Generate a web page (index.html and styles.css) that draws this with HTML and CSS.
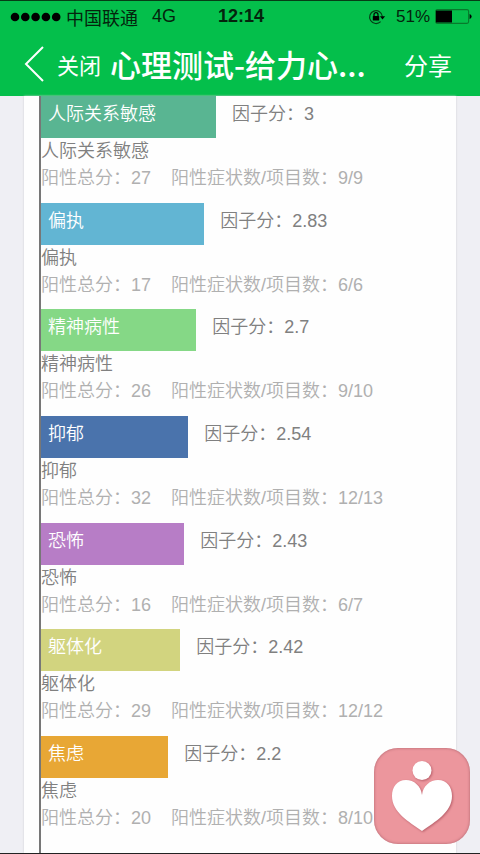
FILE: index.html
```html
<!DOCTYPE html>
<html lang="zh-CN">
<head>
<meta charset="utf-8">
<meta name="viewport" content="width=device-width, initial-scale=1">
<title>心理测试</title>
<link rel="stylesheet" href="styles.css">
</head>
<body>
<header class="top">
  <div class="status">
    <div class="status-left">
      <svg class="signal" viewBox="0 0 51 10" aria-hidden="true"><circle cx="5" cy="5" r="4.3"/><circle cx="15.3" cy="5" r="4.3"/><circle cx="25.6" cy="5" r="4.3"/><circle cx="35.9" cy="5" r="4.3"/><circle cx="46.2" cy="5" r="4.3"/></svg>
      <span>中国联通</span>
      <span class="network">4G</span>
    </div>
    <div class="clock">12:14</div>
    <div class="status-right">
      <svg class="lock" viewBox="0 0 18 16" aria-hidden="true"><path d="M12.6 12.6A6.4 6.4 0 1 1 14.4 7.500" fill="none" stroke="#063d16" stroke-width="1.2"/><path d="M11.900 7.2h5.2l-2.600 3.2z"/><rect x="4.800" y="7" width="6.4" height="4.6" rx=".5"/><path d="M6 7V5.600a2 2 0 0 1 4 0V7" fill="none" stroke="#000" stroke-width="1.2"/></svg>
      <span>51%</span>
      <svg class="battery" viewBox="0 0 37 15" aria-hidden="true"><rect x=".6" y=".6" width="33" height="13.8" rx="1.6" fill="none" stroke="#087a2c" stroke-width="1.1"/><rect x="1" y="1.5" width="16" height="12"/><path d="M34.6 5q2 .6 2 2.5t-2 2.5z"/></svg>
    </div>
  </div>
  <nav class="nav">
    <button class="back" type="button" aria-label="返回"><svg viewBox="0 0 20 36" aria-hidden="true"><path d="M19 1 2 18l17 17" fill="none" stroke="#fff" stroke-width="2"/></svg></button>
    <button class="close" type="button">关闭</button>
    <h1 class="title">心理测试-给力心...</h1>
    <button class="share" type="button">分享</button>
  </nav>
</header>
<main class="card">
  <ul class="factors">
    <li><div class="row"><div class="bar green" style="width:44%">人际关系敏感</div><span class="score">因子分：3</span></div><h2 class="name">人际关系敏感</h2><p class="stats"><span>阳性总分：27</span><span>阳性症状数/项目数：9/9</span></p></li>
    <li><div class="row"><div class="bar sky" style="width:41%">偏执</div><span class="score">因子分：2.83</span></div><h2 class="name">偏执</h2><p class="stats"><span>阳性总分：17</span><span>阳性症状数/项目数：6/6</span></p></li>
    <li><div class="row"><div class="bar lime" style="width:39%">精神病性</div><span class="score">因子分：2.7</span></div><h2 class="name">精神病性</h2><p class="stats"><span>阳性总分：26</span><span>阳性症状数/项目数：9/10</span></p></li>
    <li><div class="row"><div class="bar blue" style="width:37%">抑郁</div><span class="score">因子分：2.54</span></div><h2 class="name">抑郁</h2><p class="stats"><span>阳性总分：32</span><span>阳性症状数/项目数：12/13</span></p></li>
    <li><div class="row"><div class="bar purple" style="width:36%">恐怖</div><span class="score">因子分：2.43</span></div><h2 class="name">恐怖</h2><p class="stats"><span>阳性总分：16</span><span>阳性症状数/项目数：6/7</span></p></li>
    <li><div class="row"><div class="bar olive" style="width:35%">躯体化</div><span class="score">因子分：2.42</span></div><h2 class="name">躯体化</h2><p class="stats"><span>阳性总分：29</span><span>阳性症状数/项目数：12/12</span></p></li>
    <li><div class="row"><div class="bar orange" style="width:32%">焦虑</div><span class="score">因子分：2.2</span></div><h2 class="name">焦虑</h2><p class="stats"><span>阳性总分：20</span><span>阳性症状数/项目数：8/10</span></p></li>
  </ul>
</main>
<button class="heart" type="button" aria-label="心理咨询"><svg viewBox="0 0 96 96" aria-hidden="true"><circle cx="48" cy="22.500" r="9.500"/><path d="M48 47C47 38 40 32 32 32C23 32 18 39 18 48C18 64 35 74 48 83C61 74 78 64 78 48C78 39 73 32 64 32C56 32 49 38 48 47Z"/></svg></button>
</body>
</html>
```

FILE: styles.css
```css
* {
  box-sizing: border-box;
}

body {
  margin: 0;
  min-height: 100vh;
  display: flex;
  flex-direction: column;
  background: #efeff4;
  border-bottom: 1px solid #222;
  font-family: "Liberation Sans", "Noto Sans CJK SC", sans-serif;
  font-size: 18px;
}

button {
  padding: 0;
  border: 0;
  background: none;
  color: inherit;
  font: inherit;
}

svg {
  display: block;
}

.top {
  height: 96px;
  background: #04bf4b;
  border-top: 1px solid #063d16;
  color: #fff;
}

.status {
  display: grid;
  grid-template-columns: 1fr auto 1fr;
  align-items: center;
  height: 31px;
  padding: 0 8px 0 10px;
  color: #04240d;
}

.status-left,
.status-right {
  display: flex;
  align-items: center;
  gap: 5px;
}

.status-right {
  justify-content: flex-end;
  font-size: 17px;
}

.signal {
  width: 51px;
  height: 10px;
}

.network {
  margin-left: 9px;
}

.clock {
  font-weight: 700;
}

.lock {
  width: 18px;
  height: 16px;
  margin-right: 5px;
}

.battery {
  width: 37px;
  height: 15px;
}

.nav {
  display: flex;
  align-items: center;
  height: 64px;
  padding: 0 28px 0 24px;
}

.back svg {
  width: 20px;
  height: 36px;
}

.close {
  margin-left: 13px;
  font-size: 22px;
}

.title {
  flex: 1;
  margin: 0 0 0 9px;
  font-family: "Noto Sans CJK SC", sans-serif;
  font-size: 31px;
  font-weight: 500;
  line-height: 40px;
  white-space: nowrap;
}

.share {
  font-size: 24px;
}

.card {
  flex: 1;
  display: flex;
  margin: 0 24px;
  padding: 0 17px 0 15px;
  background: #fefefe;
  box-shadow: 0 0 2px #ccccd2;
}

.factors {
  flex: 1;
  display: flex;
  flex-direction: column;
  justify-content: space-between;
  margin: 0;
  padding: 0 0 21px;
  border-left: 2px solid #777;
  list-style: none;
}

.row {
  display: flex;
  gap: 16px;
  height: 42px;
  line-height: 36px;
}

.bar {
  padding-left: 7px;
  color: #fff;
  font-weight: 350;
  white-space: nowrap;
}

.score {
  color: #808080;
  font-weight: 350;
}

.name,
.stats {
  margin: 0;
  font-size: 18px;
  font-weight: 350;
  line-height: 27px;
}

.name {
  color: #808080;
}

.stats {
  display: flex;
  gap: 20px;
  color: #b0b0b0;
  white-space: nowrap;
}

.green { background: #59b592; }
.sky { background: #62b5d3; }
.lime { background: #85d886; }
.blue { background: #4a73ac; }
.purple { background: #b77dc6; }
.olive { background: #d2d47f; }
.orange { background: #e8a735; }

.heart {
  position: fixed;
  right: 10px;
  bottom: 10px;
  width: 96px;
  height: 96px;
  border-radius: 24px;
  background: #ec969d;
  box-shadow: inset 0 0 3px #a9606a;
}

.heart svg {
  fill: #fff;
  filter: drop-shadow(1px 1px 1px #b9606b);
}
```
